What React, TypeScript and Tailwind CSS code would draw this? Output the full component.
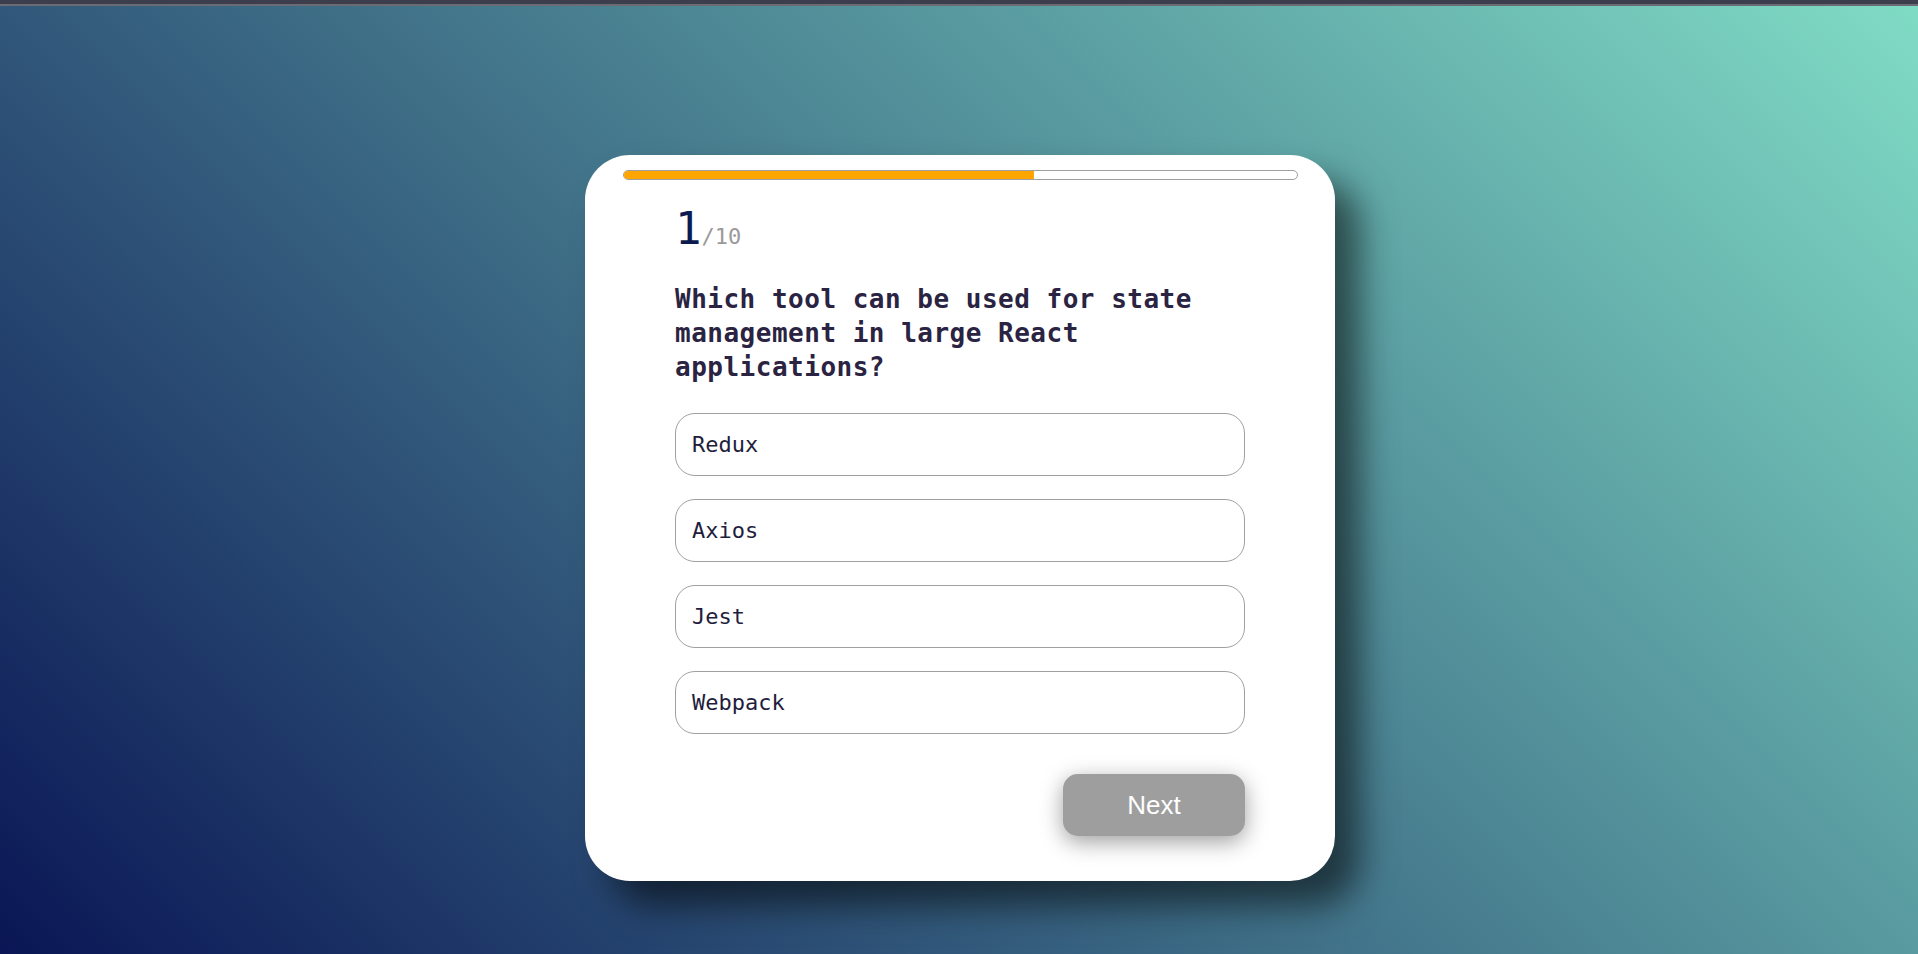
import { useState } from "react";

const OPTIONS = ["Redux", "Axios", "Jest", "Webpack"];

function App() {
	const [selected, setSelected] = useState<number | null>(null);
	const progress = 61;

	return (
		<div className="min-h-screen flex flex-col bg-[linear-gradient(45deg,#0a1655,#80dcc5)] font-['DejaVu_Sans_Mono',monospace]">
			<div className="h-1 bg-[#3c3e4d]" />
			<div className="h-[2px] bg-[#6a6b73]" />

			<div className="flex justify-center pt-[149px] pl-[2px]">
				<div className="w-[750px] bg-white rounded-[45px] pt-[15px] pb-[45px] shadow-[25px_25px_35px_rgba(0,0,0,0.55)]">
					{/* progress */}
					<div className="mx-auto w-[90%] h-[10px] rounded-full border border-[#a0a0a0] bg-white overflow-hidden">
						<div
							className="h-full bg-[#ffa500]"
							style={{ width: `${progress}%` }}
						/>
					</div>

					<div className="px-[90px]">
						<div className="mt-[27px] flex items-baseline">
							<span className="text-[44px] leading-[44px] text-[#0b1a4f]">1</span>
							<span className="text-[22px] text-[#9a9a9a]">/10</span>
						</div>

						<h2 className="mt-[29px] text-[26px] leading-[34px] font-bold tracking-[0.5px] text-[#2a2342]">
							Which tool can be used for state management in large React
							applications?
						</h2>

						<div className="mt-[29px] flex flex-col gap-[23px]">
							{OPTIONS.map((opt, i) => (
								<button
									key={opt}
									type="button"
									onClick={() => setSelected(i)}
									className={
										selected === i
											? "h-[63px] w-full rounded-[20px] border border-[#ffa500] bg-white px-4 text-left text-[22px] text-[#231d3d]"
											: "h-[63px] w-full rounded-[20px] border border-[#a0a0a0] bg-white px-4 text-left text-[22px] text-[#231d3d]"
									}
								>
									{opt}
								</button>
							))}
						</div>

						<div className="mt-[40px] flex justify-end">
							<button
								type="button"
								className="h-[62px] w-[182px] rounded-[15px] bg-[#9e9e9e] text-white text-[26px] font-['Liberation_Sans',Arial,sans-serif] shadow-[0_6px_22px_rgba(0,0,0,0.38)]"
							>
								Next
							</button>
						</div>
					</div>
				</div>
			</div>
		</div>
	);
}

export default App;
